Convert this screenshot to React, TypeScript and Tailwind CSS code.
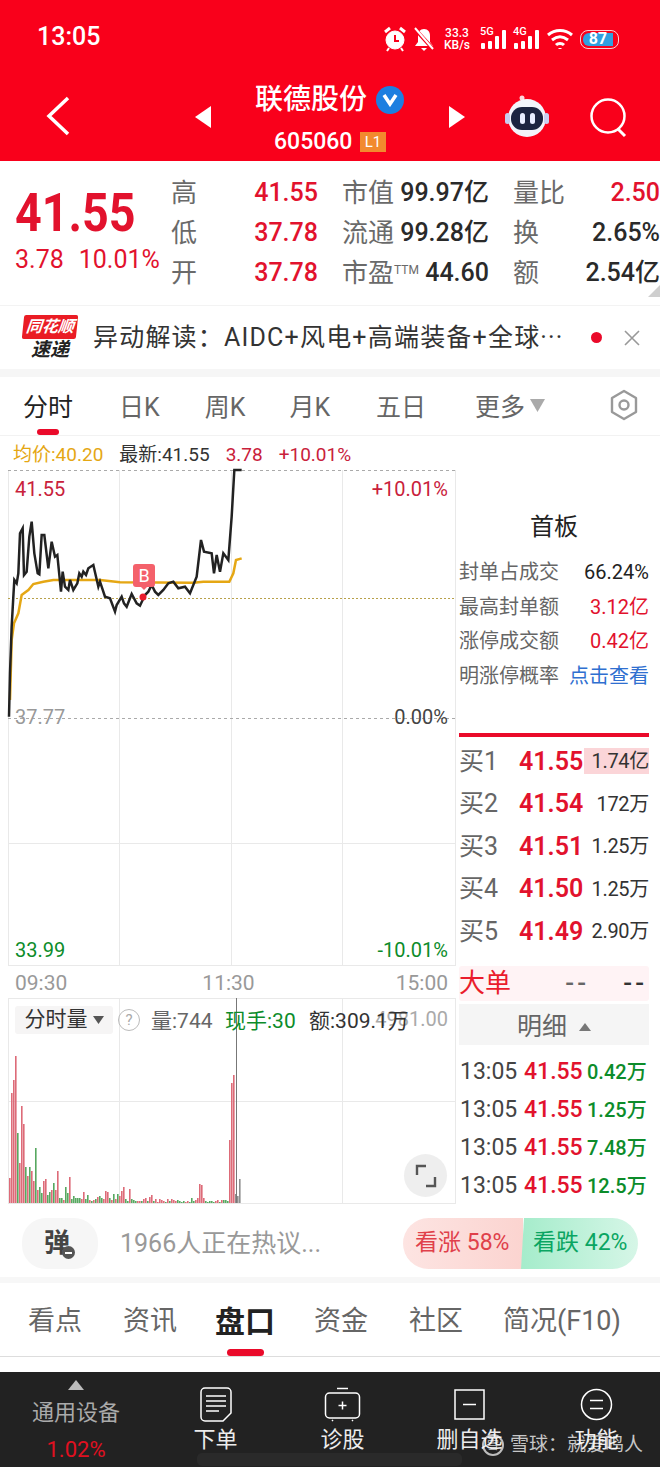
import { Fragment } from "react"

const red = "text-[#e2122d]"

const priceLine = [[27,830],[30,700],[35,560],[40,470],[43,420],[50,430],[55,400],[60,280],[68,265],[72,405],[80,395],[88,290],[95,245],[103,340],[113,400],[118,403],[125,285],[133,285],[145,385],[155,305],[165,350],[172,345],[183,455],[188,395],[195,440],[205,450],[210,420],[220,450],[232,430],[238,400],[245,410],[250,395],[258,405],[265,385],[280,375],[295,440],[300,425],[315,470],[330,475],[345,515],[350,495],[365,470],[372,490],[380,500],[395,462],[410,490],[420,497],[435,465],[445,455],[455,435],[465,455],[475,465],[490,450],[505,430],[520,425],[535,445],[555,440],[570,460],[590,410],[603,300],[612,335],[635,340],[642,400],[650,345],[660,395],[670,340],[685,360],[695,230],[703,90],[725,90]]
const avgLine = [[30,780],[35,600],[42,550],[55,520],[65,465],[85,450],[100,432],[130,425],[160,420],[300,420],[360,427],[580,428],[610,425],[688,425],[700,400],[708,360],[725,355]]
const toPoints = (pts: number[][]) => pts.map(([x, y]) => `${x / 3},${y / 3 - 28}`).join(" ")

const vol = "25r 110r 123r 147r 70g 40r 97r 79r 36g 27r 36g 32r 22r 55g 13r 16g 10g 22r 24r 8g 11g 13r 20g 13r 32r 5g 5g 3r 16g 10g 26r 4g 7g 5g 5g 5g 4r 11r 4g 8g 3r 2g 3r 4g 6r 7g 5g 4r 12r 11r 5g 3r 9g 4r 9g 7r 12r 16r 4g 2g 14r 4g 3g 2g 2r 2r 2g 4r 5r 2g 6r 8r 2g 4r 1r 4r 3r 2r 1g 4r 2g 4r 3r 2r 3g 2g 1g 2g 1r 2r 1g 5g 2g 3r 5r 19r 18r 5r 2g 1g 2g 2g 1g 2r 3r 1g 3r 3g 3g 2g 63r 120r 128r 9x 7x 24x"
  .split(" ")
  .map((s) => ({ h: parseInt(s), c: s.slice(-1) }))
const volColor: Record<string, string> = { r: "#dd6b78", g: "#57a860", x: "#8f8f8f" }

const quoteCols = [
  [["高", "41.55", true], ["低", "37.78", true], ["开", "37.78", true]],
  [["市值", "99.97亿", false], ["流通", "99.28亿", false], ["市盈", "44.60", false]],
  [["量比", "2.50", true], ["换", "2.65%", false], ["额", "2.54亿", false]],
] as [string, string, boolean][][]

const buys = [
  ["买1", "41.55", "1.74亿"],
  ["买2", "41.54", "172万"],
  ["买3", "41.51", "1.25万"],
  ["买4", "41.50", "1.25万"],
  ["买5", "41.49", "2.90万"],
]

const ticks = ["0.42万", "1.25万", "7.48万", "12.5万"]

function Signal({ label }: { label: string }) {
  return (
    <div className="relative h-[24px] w-[27px]">
      <span className="absolute left-0 top-[-1px] text-[11px] font-medium leading-[12px]">{label}</span>
      <svg width="27" height="24" viewBox="0 0 27 24" fill="white" className="absolute left-0 top-0">
        <rect x="1" y="16" width="4" height="6" rx="1" />
        <rect x="8" y="14" width="4" height="8" rx="1" />
        <rect x="15" y="9" width="4" height="13" rx="1" />
        <rect x="22" y="3" width="4" height="19" rx="1" />
      </svg>
    </div>
  )
}

function StatusBar() {
  return (
    <div className="flex h-[60px] items-end pb-[8px] pl-[37px] text-white">
      <span className="text-[25px] font-medium leading-[30px]">13:05</span>
      <div className="ml-auto mr-[41px] flex items-center">
        <svg width="24" height="26" viewBox="0 0 24 26" fill="none" stroke="white">
          <circle cx="12" cy="14" r="9" fill="white" />
          <path d="M12 9v6h4" stroke="#f9001b" strokeWidth="2" />
          <path d="M2 6l5-4M22 6l-5-4" strokeWidth="3" />
          <path d="M6 22l-2 3M18 22l2 3" strokeWidth="2" />
        </svg>
        <svg width="22" height="26" viewBox="0 0 22 26" fill="white" className="ml-[6px]">
          <path d="M11 3c4 0 6 3 6 7v6l3 4H2l3-4v-6c0-4 2-7 6-7z" />
          <path d="M8 22h6l-3 3z" />
          <path d="M1 2l20 22" stroke="#f9001b" strokeWidth="4" />
          <path d="M2 2l18 21" stroke="white" strokeWidth="2" />
        </svg>
        <div className="ml-[8px] flex w-[28px] flex-col text-center text-[12px] font-medium leading-[12px]">
          <span>33.3</span>
          <span>KB/s</span>
        </div>
        <div className="ml-[9px]"><Signal label="5G" /></div>
        <div className="ml-[6px]"><Signal label="4G" /></div>
        <svg width="28" height="24" viewBox="0 0 28 24" fill="none" stroke="white" strokeWidth="3" className="ml-[6px]">
          <path d="M2 8c7-6 17-6 24 0" />
          <path d="M6 13c5-4 11-4 16 0" />
          <path d="M10 18c2-2 6-2 8 0" />
          <path d="M14 21v1" strokeWidth="3" />
        </svg>
        <div className="ml-[6px] flex h-[19px] w-[39px] items-center rounded-[8px] border border-white/80 p-[2px]">
          <div className="flex h-full w-[30px] items-center justify-center rounded-l-[6px] bg-[#2f9fe0] text-[16px] font-bold leading-none text-white">87</div>
        </div>
      </div>
    </div>
  )
}

function Nav() {
  return (
    <div className="flex h-[101px] items-start text-white">
      <svg width="24" height="40" viewBox="0 0 24 40" fill="none" stroke="white" strokeWidth="3.5" className="ml-[46px] mt-[36px]">
        <path d="M22 2L3 20l19 18" />
      </svg>
      <svg width="16" height="22" viewBox="0 0 16 22" fill="white" className="ml-[125px] mt-[46px]"><path d="M16 0v22L0 11z" /></svg>
      <div className="ml-[44px] w-[149px] pt-[22px]">
        <div className="flex h-[36px] items-center">
          <span className="text-[28px] font-medium leading-[36px]">联德股份</span>
          <span className="ml-[9px] flex h-[28px] w-[28px] items-center justify-center rounded-full bg-[#1d7fe0]">
            <svg width="16" height="14" viewBox="0 0 16 14" fill="none" stroke="white" strokeWidth="3.5"><path d="M2 2l6 9 6-9" /></svg>
          </span>
        </div>
        <div className="mt-[6px] flex items-center pl-[19px]">
          <span className="w-[77px] text-[23px] font-medium leading-[36px]">605060</span>
          <span className="ml-[9px] flex h-[20px] w-[26px] items-center justify-center bg-[#f28a2e] text-[15px] leading-none">L1</span>
        </div>
      </div>
      <svg width="16" height="22" viewBox="0 0 16 22" fill="white" className="ml-[45px] mt-[46px]"><path d="M0 0v22l16-11z" /></svg>
      <svg width="46" height="44" viewBox="0 0 46 44" className="ml-[39px] mt-[34px]">
        <circle cx="18" cy="4" r="2.5" fill="#ffd6dc" />
        <path d="M18 4l3 6" stroke="#ffd6dc" strokeWidth="2" />
        <circle cx="23" cy="24" r="19" fill="#f3f4fb" />
        <rect x="1" y="19" width="5" height="11" rx="2.5" fill="#c9cdf0" />
        <rect x="40" y="19" width="5" height="11" rx="2.5" fill="#c9cdf0" />
        <rect x="7" y="13" width="32" height="23" rx="11" fill="#1c2340" />
        <rect x="16" y="19" width="5" height="11" rx="2.5" fill="#e8ecff" />
        <rect x="26" y="19" width="5" height="11" rx="2.5" fill="#e8ecff" />
      </svg>
      <svg width="40" height="40" viewBox="0 0 40 40" fill="none" stroke="white" strokeWidth="2.5" className="ml-[39px] mt-[38px]">
        <circle cx="19" cy="18" r="16.5" />
        <path d="M29 31l7 7" strokeWidth="3" />
      </svg>
    </div>
  )
}

function Quote() {
  return (
    <div className="flex h-[144px] bg-white">
      <div className="w-[171px] pl-[15px] pt-[22px]">
        <div className={`origin-left scale-x-[0.88] text-[53px] font-bold leading-[60px] ${red}`}>41.55</div>
        <div className={`mt-[2px] flex gap-[15px] whitespace-nowrap text-[25px] leading-[30px] ${red}`}>
          <span>3.78</span>
          <span>10.01%</span>
        </div>
      </div>
      <div className="flex gap-[24px] pt-[12px]">
        {quoteCols.map((col, i) => (
          <div key={i} className="w-[147px]">
            {col.map(([label, value, isRed]) => (
              <div key={label} className="flex h-[40px] items-center justify-between whitespace-nowrap">
                <span className="text-[26px] text-[#6a6a6a]">
                  {label}
                  {label === "市盈" && <span className="align-[8px] text-[12px]">TTM</span>}
                </span>
                <span className={`text-[25px] font-medium ${isRed ? red : "text-[#2a2a2a]"}`}>{value}</span>
              </div>
            ))}
          </div>
        ))}
      </div>
      <div className="relative">
        <div className="absolute right-0 top-[124px] h-0 w-0 border-b-[12px] border-l-[12px] border-b-[#cfcfcf] border-l-transparent" />
      </div>
    </div>
  )
}

function Notice() {
  return (
    <div className="h-[72px] border-t border-[#f3f3f3] bg-white">
      <div className="flex h-[63px] items-center pl-[23px]">
        <div className="flex w-[54px] flex-col items-center">
          <span className="w-full -skew-x-6 rounded-[2px] bg-[#ea1c24] text-center text-[16px] font-bold italic leading-[24px] text-white">同花顺</span>
          <span className="text-[19px] font-bold italic leading-[22px] text-[#222]">速递</span>
        </div>
        <span className="ml-[16px] w-[473px] whitespace-nowrap text-[25px] tracking-[1.2px] text-[#333]">异动解读：AIDC+风电+高端装备+全球···</span>
        <span className="ml-[25px] h-[11px] w-[11px] rounded-full bg-[#ea0a2a]" />
        <svg width="16" height="16" viewBox="0 0 16 16" stroke="#999" strokeWidth="1.6" className="ml-[22px]"><path d="M1 1l14 14M15 1L1 15" /></svg>
      </div>
      <div className="h-[9px] bg-[#f6f6f6]" />
    </div>
  )
}

function PeriodTabs() {
  const tabs = [["分时", "ml-[23px]"], ["日K", "ml-[46px]"], ["周K", "ml-[45px]"], ["月K", "ml-[44px]"], ["五日", "ml-[46px]"], ["更多", "ml-[49px]"]]
  return (
    <div className="relative flex h-[59px] items-center border-b border-[#f2f2f2] bg-white pb-[2px] text-[25px] text-[#666]">
      {tabs.map(([t, ml], i) => (
        <span key={t} className={`${ml} mt-[6px] ${i === 0 ? "text-[#222]" : ""}`}>{t}</span>
      ))}
      <svg width="15" height="13" viewBox="0 0 15 13" fill="#aaa" className="ml-[5px]"><path d="M0 0h15L7.5 13z" /></svg>
      <svg width="30" height="32" viewBox="0 0 30 32" fill="none" stroke="#999" strokeWidth="2.4" className="ml-[64px]">
        <path d="M15 2l12 7v14l-12 7-12-7V9z" strokeLinejoin="round" />
        <circle cx="15" cy="16" r="4.5" />
      </svg>
      <div className="absolute bottom-0 left-[37px] h-[6px] w-[22px] rounded-full bg-[#ea0a2a]" />
    </div>
  )
}

function PriceChart() {
  return (
    <div className="relative h-[498px] w-[456px]">
      <svg width="456" height="498" viewBox="0 0 456 498" className="absolute left-0 top-0">
        <g stroke="#e9e9e9" strokeWidth="1">
          <path d="M8.5 2v496M119.5 2v496M231.5 2v496M342.5 2v496M455.5 2v496M8 375.5h448M8 497.5h448" />
        </g>
        <path d="M8 2.5h448M8 250.5h448" stroke="#aaa" strokeDasharray="3 3" fill="none" />
        <path d="M8 130.5h448" stroke="#b8a14a" strokeDasharray="2 2" fill="none" />
        <polyline points={toPoints(avgLine)} fill="none" stroke="#e5a714" strokeWidth="2.5" />
        <polyline points={toPoints(priceLine)} fill="none" stroke="#222" strokeWidth="2.5" />
        <circle cx="143" cy="129" r="3.5" fill="#ea1c2c" />
      </svg>
      <div className="absolute left-[133px] top-[96px] flex h-[23px] w-[22px] items-center justify-center rounded-[3px] bg-[#f4616b] text-[18px] leading-none text-white">
        B
        <span className="absolute top-[22px] h-0 w-0 border-l-[4px] border-r-[4px] border-t-[4px] border-l-transparent border-r-transparent border-t-[#f4616b]" />
      </div>
      <span className="absolute left-[15px] top-[6px] text-[20px] text-[#c9213b]">41.55</span>
      <span className="absolute right-[8px] top-[6px] text-[20px] text-[#c9213b]">+10.01%</span>
      <span className="absolute left-[15px] top-[234px] text-[20px] text-[#999]">37.77</span>
      <span className="absolute right-[8px] top-[234px] text-[20px] text-[#444]">0.00%</span>
      <span className="absolute left-[15px] top-[467px] text-[20px] text-[#0c8c2a]">33.99</span>
      <span className="absolute right-[8px] top-[467px] text-[20px] text-[#0c8c2a]">-10.01%</span>
    </div>
  )
}

function VolumeChart() {
  return (
    <div className="relative h-[206px] w-[456px]">
      <svg width="456" height="206" viewBox="0 0 456 206" className="absolute left-0 top-0">
        <path d="M8.5 0v206M119.5 0v206M342.5 0v206M455.5 0v206M8 0.5h448M8 103.5h448M8 205.5h448" stroke="#e9e9e9" fill="none" />
        {vol.map((b, i) => (
          <rect key={i} x={9 + i * 2} y={205 - b.h} width="1.6" height={b.h} fill={volColor[b.c]} />
        ))}
        <path d="M236.5 0v205" stroke="#777" />
      </svg>
      <span className="absolute right-[8px] top-[6px] text-[20px] text-[#aaa]">4981.00</span>
      <div className="absolute left-[15px] top-[8px] flex h-[28px] w-[98px] items-center justify-center gap-[5px] rounded-[3px] bg-[#f6f5f5] text-[21px] text-[#333]">
        分时量
        <svg width="11" height="8" viewBox="0 0 11 8" fill="#555"><path d="M0 0h11L5.5 8z" /></svg>
      </div>
      <span className="absolute left-[118px] top-[11px] flex h-[22px] w-[22px] items-center justify-center rounded-full border border-[#bbb] text-[15px] leading-none text-[#aaa]">?</span>
      <span className="absolute left-[151px] top-[9px] text-[21px] leading-[28px] text-[#666]">量:744</span>
      <span className="absolute left-[225px] top-[9px] text-[21px] leading-[28px] text-[#0c8c2a]">现手:30</span>
      <span className="absolute left-[309px] top-[9px] text-[21px] leading-[28px] text-[#333]">额:309.1万</span>
      <div className="absolute left-[404px] top-[156px] flex h-[43px] w-[43px] items-center justify-center rounded-full bg-[#eeeeee]">
        <svg width="24" height="24" viewBox="0 0 24 24" fill="none" stroke="#555" strokeWidth="2.4">
          <path d="M12 2H3v9M12 22h9v-9" />
        </svg>
      </div>
    </div>
  )
}

function SidePanel() {
  return (
    <div className="w-[204px] pl-[3px] pr-[11px] pt-[42px]">
      <div className="text-center text-[24px] leading-[34px] text-[#222]">首板</div>
      <div className="mt-[11px] text-[20px]">
        {[
          ["封单占成交", "66.24%", "text-[#222]"],
          ["最高封单额", "3.12亿", red],
          ["涨停成交额", "0.42亿", red],
          ["明涨停概率", "点击查看", "text-[#2f6fd0]"],
        ].map(([k, v, c]) => (
          <div key={k} className="flex h-[34.5px] items-center justify-between whitespace-nowrap">
            <span className="text-[#666]">{k}</span>
            <span className={c}>{v}</span>
          </div>
        ))}
      </div>
      <div className="mt-[40px] h-[4px] bg-[#ea0a2a]" />
      <div className="mt-[3px]">
        {buys.map(([label, price, size], i) => (
          <div key={label} className="flex h-[42.5px] items-center whitespace-nowrap">
            <span className="w-[60px] text-[25px] text-[#666]">{label}</span>
            <span className={`w-[65px] text-[25px] font-semibold ${red}`}>{price}</span>
            <span className={`flex h-[26px] flex-1 items-center justify-end text-[20px] tracking-[-0.3px] text-[#333] ${i === 0 ? "bg-[#fbd5d8]" : ""}`}>{size}</span>
          </div>
        ))}
      </div>
      <div className="mt-[13px] flex h-[35px] items-center justify-between rounded-[3px] bg-[#fff3f5] pr-[2px] text-[26px] text-[#ea1c2c]">
        <span>大单</span>
        <span className="ml-[20px] text-[26px] font-medium leading-none tracking-[3px] text-[#666]">--</span>
        <span className="text-[26px] font-medium leading-none tracking-[3px] text-[#333]">--</span>
      </div>
      <div className="mt-[3px] flex h-[41px] items-center justify-center gap-[12px] bg-[#f5f5f5] pt-[5px] text-[25px] text-[#666]">
        明细
        <svg width="12" height="8" viewBox="0 0 12 8" fill="#777"><path d="M0 8h12L6 0z" /></svg>
      </div>
      <div className="mt-[9px]">
        {ticks.map((t) => (
          <div key={t} className="flex h-[37.8px] items-center whitespace-nowrap pl-[1px]">
            <span className="w-[64px] text-[23px] text-[#444]">13:05</span>
            <span className={`w-[63px] text-[23px] font-medium ${red}`}>41.55</span>
            <span className="text-[20px] font-medium text-[#0c8c2a]">{t}</span>
          </div>
        ))}
      </div>
    </div>
  )
}

function Discussion() {
  return (
    <Fragment>
      <div className="flex h-[73px] items-center bg-white pl-[22px] pt-[6px]">
        <div className="relative flex h-[51px] w-[76px] items-center justify-center rounded-[24px] bg-[#f6f6f6] text-[26px] font-bold text-[#444]">
          <span className="mr-[6px]">弹</span>
          <span className="absolute left-[40px] top-[28px] flex h-[13px] w-[13px] items-center justify-center rounded-full bg-[#555]">
            <span className="h-[2px] w-[7px] bg-white" />
          </span>
        </div>
        <span className="ml-[22px] w-[283px] text-[25px] text-[#999]">1966人正在热议...</span>
        <div className="flex h-[51px] w-[235px] overflow-hidden rounded-full text-[23px]">
          <div className="flex w-[120px] items-center pl-[12px] text-[#e0404a] [background:linear-gradient(90deg,#fde4e2,#fbd4d0)]">看涨 58%</div>
          <div className="-ml-[2px] flex w-[117px] items-center pl-[12px] text-[#0aa562] [background:linear-gradient(90deg,#a5eccb,#d6f6e7)] [clip-path:polygon(3px_0,100%_0,100%_100%,0_100%)]">看跌 42%</div>
        </div>
      </div>
      <div className="h-[6px] bg-[#f7f7f7]" />
    </Fragment>
  )
}

function InfoTabs() {
  const tabs = [["看点", "ml-[28px]"], ["资讯", "ml-[41px]"], ["盘口", "ml-[38px] text-[30px] font-bold text-[#222]"], ["资金", "ml-[39px]"], ["社区", "ml-[41px]"], ["简况(F10)", "ml-[40px]"]]
  return (
    <div className="relative flex h-[74px] items-center border-b border-[#dddddd] bg-white pt-[4px] text-[27px] text-[#666]">
      {tabs.map(([t, c]) => (
        <span key={t} className={c}>{t}</span>
      ))}
      <div className="absolute bottom-0 left-[227px] h-[7px] w-[37px] rounded-full bg-[#ea0a2a]" />
    </div>
  )
}

function BottomBar() {
  return (
    <div className="relative flex h-[95px] bg-[#222222] text-[#ececec]">
      <div className="flex w-[152px] flex-col items-center pt-[8px]">
        <svg width="16" height="10" viewBox="0 0 16 10" fill="#bbb"><path d="M0 10h16L8 0z" /></svg>
        <span className="mt-[8px] text-[22px] leading-[30px] text-[#aaa]">通用设备</span>
        <span className="mt-[8px] text-[22px] leading-[28px] text-[#e01020]">1.02%</span>
      </div>
      <div className="flex w-[127px] flex-col items-center pt-[15px]">
        <svg width="32" height="35" viewBox="0 0 32 35" fill="none" stroke="white" strokeWidth="1.5">
          <path d="M5 1h22a4 4 0 0 1 4 4v21l-8 8H5a4 4 0 0 1-4-4V5a4 4 0 0 1 4-4z" />
          <path d="M6 9h20M6 14h20M6 19h20M6 24h13" />
        </svg>
        <span className="mt-[3px] text-[22px] leading-[30px]">下单</span>
      </div>
      <div className="flex w-[127px] flex-col items-center pt-[15px]">
        <svg width="37" height="35" viewBox="0 0 37 35" fill="none" stroke="white" strokeWidth="1.5">
          <path d="M13 1.5h11" />
          <rect x="1.5" y="6" width="34" height="25" rx="4" />
          <path d="M18.5 14.5v8M14.5 18.5h8" />
          <path d="M8 33l1 1M29 33l-1 1" />
        </svg>
        <span className="mt-[3px] text-[22px] leading-[30px]">诊股</span>
      </div>
      <div className="flex w-[127px] flex-col items-center pt-[17px]">
        <svg width="31" height="31" viewBox="0 0 31 31" fill="none" stroke="white" strokeWidth="1.5">
          <rect x="1" y="1" width="29" height="29" />
          <path d="M9 15.5h13" />
        </svg>
        <span className="mt-[5px] text-[22px] leading-[30px]">删自选</span>
      </div>
      <div className="flex w-[127px] flex-col items-center pt-[16px]">
        <svg width="33" height="33" viewBox="0 0 33 33" fill="none" stroke="white" strokeWidth="1.5">
          <circle cx="16.5" cy="16.5" r="15" />
          <path d="M10 12.5h13M10 20.5h13" />
        </svg>
        <span className="mt-[4px] text-[22px] leading-[30px]">功能</span>
      </div>
      <div className="absolute bottom-[1px] left-[197px] h-[13px] w-[265px] rounded-[5px] bg-[#2a2a2a]" />
      <div className="absolute left-[482px] top-[60px] flex items-center text-[19px] leading-[26px] text-white/75">
        <span className="mr-[6px] flex h-[22px] w-[22px] items-center justify-center rounded-full border-2 border-white/70 text-[12px] leading-none">雪</span>
        雪球：就爱鸣人
      </div>
    </div>
  )
}

export default function App() {
  return (
    <div className="h-[1467px] w-[660px] overflow-hidden bg-white font-['Roboto','Noto_Sans_CJK_SC',sans-serif]">
      <div className="bg-[#f9001b]">
        <StatusBar />
        <Nav />
      </div>
      <Quote />
      <Notice />
      <PeriodTabs />
      <div className="flex h-[32px] items-center gap-[16px] pl-[13px] pt-[6px] text-[19px]">
        <span className="text-[#e5a714]">均价:40.20</span>
        <span className="text-[#333]">最新:41.55</span>
        <span className="text-[#c9213b]">3.78</span>
        <span className="text-[#c9213b]">+10.01%</span>
      </div>
      <div className="flex h-[736px]">
        <div className="w-[456px]">
          <PriceChart />
          <div className="flex h-[32px] w-[456px] items-center justify-between pl-[15px] pr-[8px] pt-[4px] text-[21px] text-[#999]">
            <span>09:30</span>
            <span className="-ml-[6px]">11:30</span>
            <span>15:00</span>
          </div>
          <VolumeChart />
        </div>
        <SidePanel />
      </div>
      <Discussion />
      <InfoTabs />
      <div className="h-[15px] bg-white" />
      <BottomBar />
    </div>
  )
}
